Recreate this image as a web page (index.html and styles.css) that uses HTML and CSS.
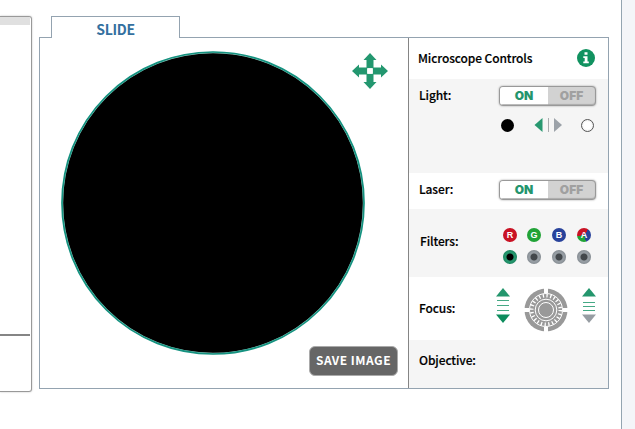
FILE: index.html
```html
<!DOCTYPE html>
<html lang="en">
<head>
<meta charset="utf-8">
<title>Microscope</title>
<link rel="stylesheet" href="styles.css">
</head>
<body>
<div class="page">
  <aside class="side-panel"><div class="side-head"></div><div class="side-rule"></div></aside>
  <main class="viewer">
    <div class="tab">SLIDE</div>
    <div class="frame">
      <section class="stage">
        <svg class="lens" width="304" height="304" viewBox="0 0 304 304"><circle cx="152" cy="152" r="150.500" fill="#000" stroke="#8fc9be" stroke-width="1.400"/><circle cx="152" cy="152" r="151" fill="none" stroke="#159280" stroke-width="1.700"/></svg>
        <svg class="move" width="36" height="36" viewBox="0 0 36 36"><g fill="#23976f"><path id="arm" d="M18 0l6.500 7h-3v8.300h-7V7h-3z"/><use href="#arm" transform="rotate(90 18 18)"/><use href="#arm" transform="rotate(180 18 18)"/><use href="#arm" transform="rotate(270 18 18)"/></g><path d="M15.300 15.300h5.400v5.400h-5.400z" fill="#fff"/></svg>
        <button class="save">SAVE IMAGE</button>
      </section>
      <section class="controls">
        <header class="row row-title"><h1>Microscope Controls</h1>
          <svg width="18" height="18" viewBox="0 0 18 18"><circle cx="9" cy="9" r="9" fill="#119260"/><path d="M7.500 3.300h3v2.500h-3zM6.300 7.200h4.200v5.300h1.300v1.700H6.300v-1.700h1.400V8.900H6.300z" fill="#fff"/></svg>
        </header>
        <div class="row row-light"><h2>Light:</h2>
          <div class="light-controls">
            <div class="toggle"><span class="on">ON</span><span class="off">OFF</span></div>
            <div class="dimmer">
              <i class="dot dark"></i>
              <svg width="28" height="14" viewBox="0 0 28 14"><path d="M8.500 0v14L.5 7z" fill="#289870"/><path d="M14.500 0v14" stroke="#a8abae"/><path d="M20 0v14l8-7z" fill="#9ca2a9"/></svg>
              <i class="dot bright"></i>
            </div>
          </div>
        </div>
        <div class="row row-laser"><h2>Laser:</h2><div class="toggle"><span class="on">ON</span><span class="off">OFF</span></div></div>
        <div class="row row-filters"><h2>Filters:</h2>
          <div class="filters">
            <span class="chip red">R</span><span class="chip green">G</span><span class="chip blue">B</span><span class="chip all">A</span>
            <i class="radio selected"></i><i class="radio"></i><i class="radio"></i><i class="radio"></i>
          </div>
        </div>
        <div class="row row-focus"><h2>Focus:</h2>
          <div class="focus">
            <svg width="14" height="35" viewBox="0 0 14 35"><path d="M7 0l7 8.500H0z" fill="#24966d"/><path d="M1 12.500h12M1 17.500h12M1 22.500h12" stroke="#45a985"/><path d="M0 26.500h14L7 35z" fill="#0c8c5c"/></svg>
            <svg class="knob" width="44" height="44" viewBox="0 0 44 44"><circle cx="22" cy="22" r="21.500" fill="#999"/><circle cx="22" cy="22" r="14.300" fill="none" stroke="#fff" stroke-width="3.600" stroke-dasharray="1.300 2.444"/><circle cx="22" cy="22" r="16.500" fill="none" stroke="#fff" stroke-width="1"/><g fill="none" stroke="#fff"><circle cx="22" cy="22" r="10.800"/><circle cx="22" cy="22" r="7.500"/></g><path d="M22 0v5M22 39v5M0 22h5M39 22h5" stroke="#fff" stroke-width="4"/></svg>
            <svg width="14" height="35" viewBox="0 0 14 35"><path d="M7 0l7 8.500H0z" fill="#24966d"/><path d="M1 14.500h12M1 18.500h12M1 22.500h12" stroke="#45a985"/><path d="M0 26.500h14L7 35z" fill="#979da3"/></svg>
          </div>
        </div>
        <div class="row row-objective"><h2>Objective:</h2></div>
      </section>
    </div>
  </main>
</div>
</body>
</html>
```
FILE: styles.css
```css
* { box-sizing: border-box; }
body { margin: 0; background: #f4f5f8; font-family: "Noto Sans CJK SC", "Noto Sans", sans-serif; color: #000; overflow: hidden; }
svg { display: block; flex: none; }
.page { display: flex; align-items: flex-start; width: 622px; height: 429px; background: #fff; border-right: 1px solid #94a5b1; }
.side-panel { flex: none; width: 32px; height: 376px; margin-top: 16px; border: 1px solid #999; border-left: 0; border-radius: 0 3px 3px 0; box-shadow: 0 0 2px #bbb; padding-right: 1px; }
.side-head { height: 8px; background: #e0e0e0; }
.side-rule { height: 2px; margin-top: 309px; background: #858585; }
.viewer { flex: none; width: 570px; margin: 16px 0 0 7px; }
.tab { position: relative; width: 129px; height: 22px; margin-left: 12px; border: 1px solid #94a3b0; border-bottom: 0; background: #fff; text-align: center; font-size: 14px; line-height: 24px; font-weight: 700; letter-spacing: -.3px; color: #34709f; z-index: 1; }
.frame { display: flex; height: 352px; margin-top: -1px; border: 1px solid #94a3b0; }
.stage { position: relative; width: 369px; border-right: 1px solid #858585; padding: 13px 0 0 21px; }
.move { position: absolute; left: 312px; top: 15px; }
.save { position: absolute; right: 10px; bottom: 12px; width: 89px; height: 30px; padding: 0 0 2px; border: 1px solid #aaa; border-radius: 6px; background: #666; color: #fff; font: 700 12px/26px "Noto Sans CJK SC", sans-serif; letter-spacing: .5px; }
.controls { width: 199px; }
.row { display: flex; justify-content: space-between; padding: 0 12px 0 10px; }
h1, h2 { margin: 0; font-size: 12px; line-height: 18px; font-weight: 500; white-space: nowrap; letter-spacing: -.12px; -webkit-text-stroke: .15px #000; }
.row-title { height: 41px; padding: 11px 13px 0 9px; }
.row-light, .row-filters, .row-objective { background: #f5f5f5; }
.row-light { height: 94px; padding-top: 7px; }
.row-laser { height: 36px; padding-top: 7px; }
.row-filters { height: 68px; padding: 19px 17px 0 11px; }
.row-filters h2 { margin-top: 4px; }
.row-focus { height: 63px; padding-top: 11px; }
.row-focus h2 { margin-top: 11px; }
.row-objective { height: 48px; padding-top: 11px; }
.toggle { display: flex; flex: none; width: 97px; height: 20px; border: 1px solid #999; border-radius: 4px; box-shadow: 0 0 2px #999, inset 0 -1px 1px #aaa; overflow: hidden; font: 900 12px/18px Inter, sans-serif; text-align: center; background: #d2d2d2; }
.on { width: 48px; background: #fff; color: #24956d; border-bottom: 1px solid #bbb; }
.off { width: 47px; color: #a0a0a0; }
.dimmer { display: flex; align-items: center; justify-content: space-between; height: 14px; margin: 12px 2px 0; }
.dot { width: 13px; height: 13px; border-radius: 50%; }
.dark { background: #000; }
.bright { border: 1px solid #555; background: radial-gradient(#fff 45%, #ddd); }
.filters { display: grid; grid-template-columns: 24px 25px 25px 14px; row-gap: 8px; align-content: start; }
.chip { width: 14px; height: 14px; border-radius: 50%; color: #fff; font: 700 9px/14px "Liberation Sans", sans-serif; text-align: center; }
.red { background: #c91224; }
.green { background: #21a337; }
.blue { background: #28429b; }
.all { background: conic-gradient(#c91224 0 10%, #28429b 10% 45%, #21a337 45% 72%, #c91224 72%); }
.radio { width: 14px; height: 14px; border-radius: 50%; background: radial-gradient(circle, #43484c 0 3px, #969da3 4px 5px, #858c92 7px); }
.selected { background: radial-gradient(circle, #000 0 3px, #24966d 4px 5px, #1d8560 7px); }
.focus { display: flex; gap: 14px; }
```
